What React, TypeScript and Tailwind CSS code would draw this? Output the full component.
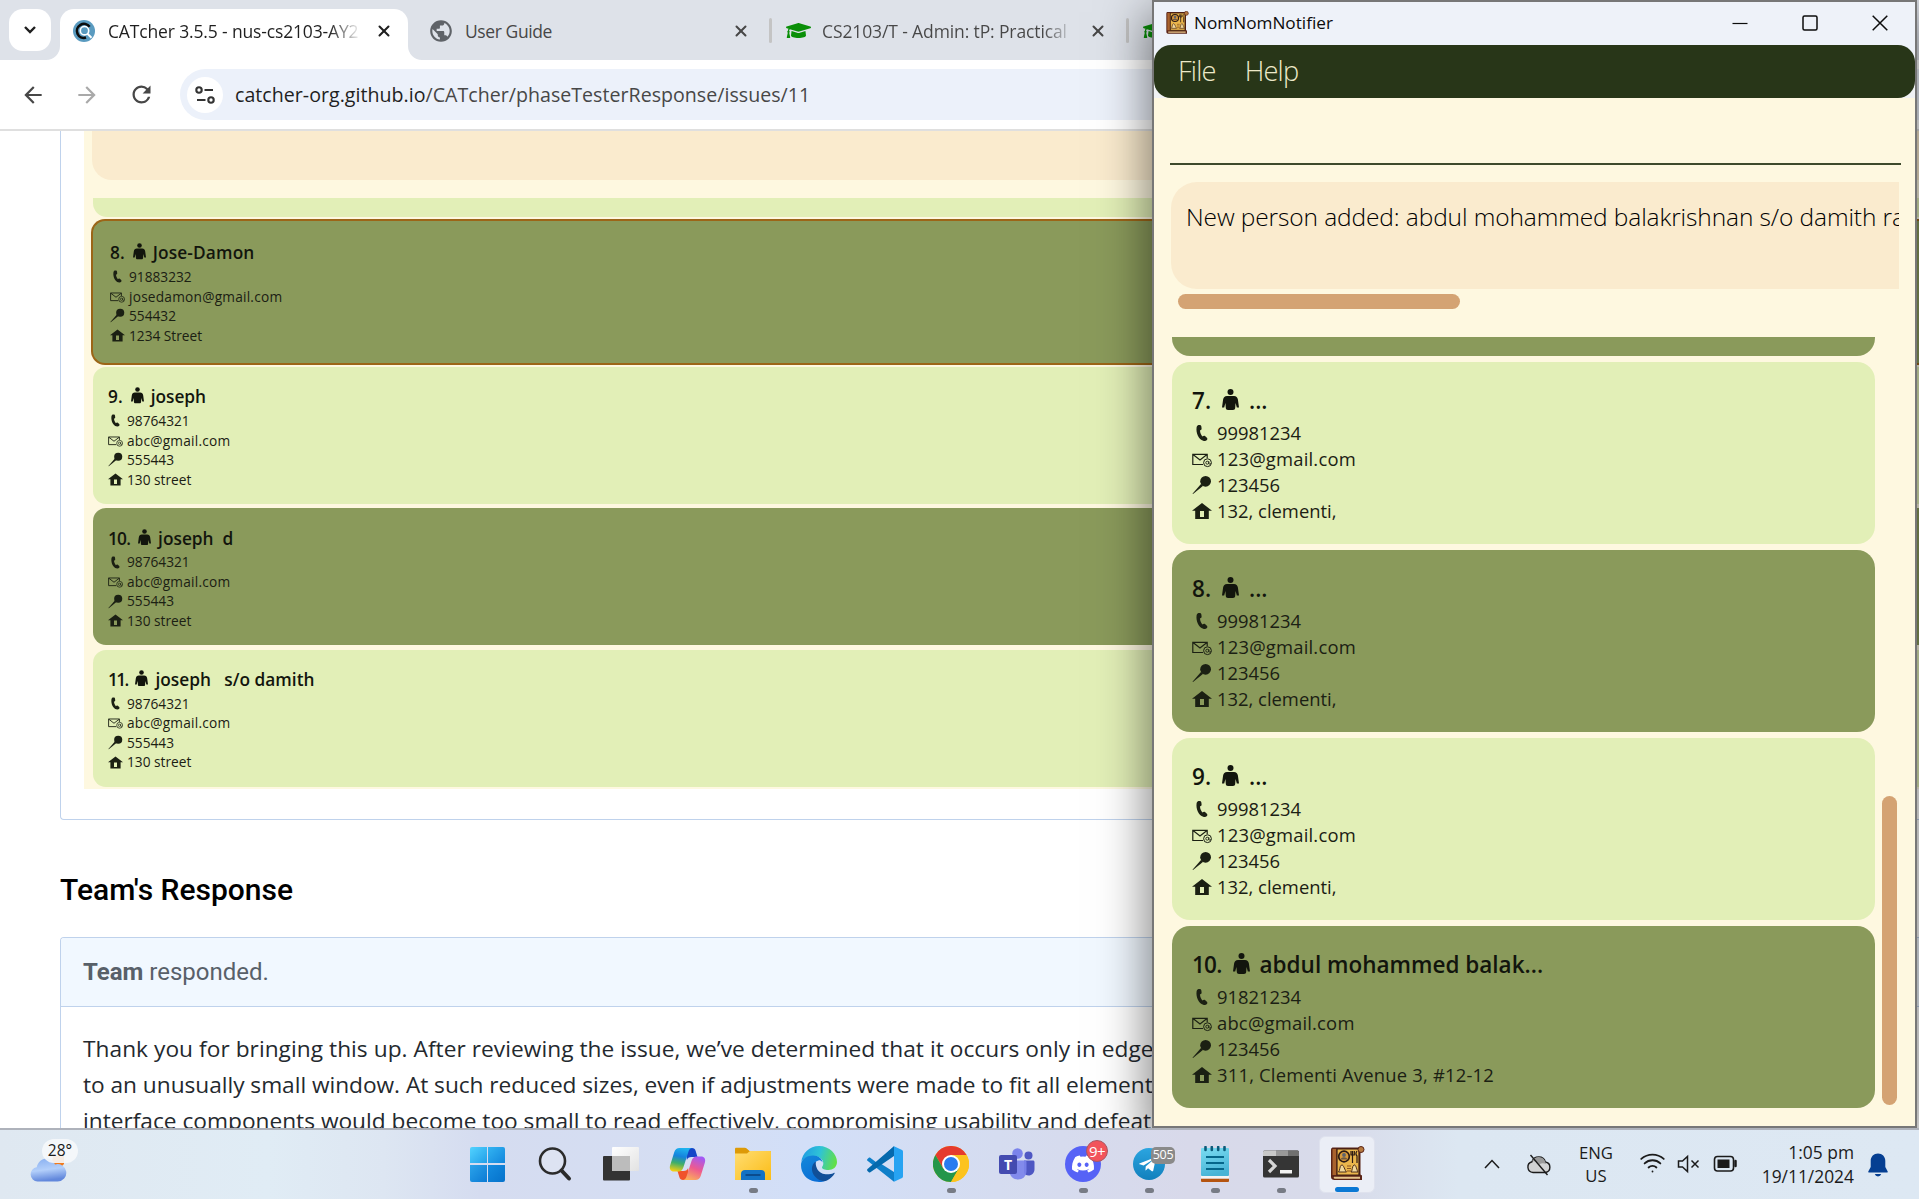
import type { ReactNode } from "react";
import { Wifi, X } from "lucide-react";
import { FaDiscord, FaGraduationCap, FaTelegramPlane } from "react-icons/fa";
import { MdArrowBack, MdArrowForward, MdPublic, MdRefresh } from "react-icons/md";

type Person = { id: number; name: string; phone: string; email: string; code: string; address: string };

const leftPeople: Person[] = [
  { id: 8, name: "Jose-Damon", phone: "91883232", email: "josedamon@gmail.com", code: "554432", address: "1234 Street" },
  { id: 9, name: "joseph", phone: "98764321", email: "abc@gmail.com", code: "555443", address: "130 street" },
  { id: 10, name: "joseph  d", phone: "98764321", email: "abc@gmail.com", code: "555443", address: "130 street" },
  { id: 11, name: "joseph   s/o damith", phone: "98764321", email: "abc@gmail.com", code: "555443", address: "130 street" },
];

const rightPeople: Person[] = [
  { id: 7, name: "...", phone: "99981234", email: "123@gmail.com", code: "123456", address: "132, clementi," },
  { id: 8, name: "...", phone: "99981234", email: "123@gmail.com", code: "123456", address: "132, clementi," },
  { id: 9, name: "...", phone: "99981234", email: "123@gmail.com", code: "123456", address: "132, clementi," },
  { id: 10, name: "abdul mohammed balak...", phone: "91821234", email: "abc@gmail.com", code: "123456", address: "311, Clementi Avenue 3, #12-12" },
];

/* Tightens the numerals of two-digit list indices. */
function indexTracking(id: number) {
  if (id === 11) return "tracking-[-1.7px]";
  if (id === 10) return "tracking-[-0.8px]";
  return "";
}

/* ---------- contact glyphs ---------- */

function PersonIcon({ className }: { className: string }) {
  return (
    <svg viewBox="0 0 17 21" className={className} fill="currentColor">
      <circle cx="8.500" cy="3" r="3" />
      <path d="M5 7h7c2.300 0 3.400 1.200 3.900 3.600L17 18.600h-2.200L13.600 14l-.4 5c-.1 1.300-.8 2-2.200 2H6c-1.400 0-2.100-.7-2.200-2l-.4-5-1.200 4.600H0l1.100-8C1.600 8.200 2.700 7 5 7z" />
    </svg>
  );
}

function PhoneIcon() {
  return (
    <svg viewBox="0 0 20 20" className="size-full" fill="currentColor">
      <path d="M4.600 4.200C4.900 2.600 6 2 7.400 2c1.300 0 1.900.6 2 1.800l.2 1.700c.1 1-.5 1.500-1.600 1.900.1 2.400 1 4.500 2.500 6.100.9-.8 1.700-1 2.500-.4l1.600 1.300c.9.8 1 1.700.3 2.600-.8 1-2.100 1.300-3.700.8C6.800 16.400 3.700 10.200 4.600 4.200z" />
    </svg>
  );
}

function MailIcon() {
  return (
    <svg viewBox="0 0 20 20" className="size-full" fill="none" stroke="currentColor" strokeWidth="1.200">
      <path d="M11 15.500H.8V5.300h14.400v4M1 5.600l7 5.400 7-5.400" />
      <circle cx="15.500" cy="13.700" r="3.900" strokeWidth="1" />
      <circle cx="15.300" cy="13.700" r="1.500" strokeWidth=".9" />
      <path d="M16.800 12.300v2c0 1.200 1.800 1 2.200 0" strokeWidth=".9" />
    </svg>
  );
}

function PinIcon() {
  return (
    <svg viewBox="0 0 20 20" className="size-full" fill="currentColor">
      <circle cx="13.600" cy="6.300" r="5.400" />
      <path d="M.5 18.700 9.200 8.800l2 2L1 19z" />
    </svg>
  );
}

function HomeIcon() {
  return (
    <svg viewBox="0 0 20 20" className="size-full" fill="currentColor" fillRule="evenodd">
      <path d="M10 2 20 9.700h-3.200V18H3.200V9.700H0zM8 10v6h4v-6z" />
    </svg>
  );
}

/* ---------- contact cards ---------- */

function SmallRow({ icon, text, wide }: { icon: ReactNode; text: string; wide?: boolean }) {
  return (
    <div className="flex h-[19.6px] items-center gap-[4px]">
      <span className="size-[15px] shrink-0">{icon}</span>
      <span className={"text-[13.7px] leading-none " + (wide ? "tracking-[0.22px]" : "")}>{text}</span>
    </div>
  );
}

function SmallCard({ p, tone, selected }: { p: Person; tone: string; selected?: boolean }) {
  return (
    <div
      className={
        (selected
          ? "-ml-[2px] h-[146px] rounded-l-[14px] border-2 border-r-0 border-[#9c6517] pt-[20px] pl-[17px] "
          : "h-[137px] rounded-l-[13px] pt-[18px] pl-[15px] ") + tone
      }
    >
      <div className="flex h-[24px] items-center text-[17.3px] font-semibold text-[#12150d]">
        <span className={"mr-[8px] leading-none " + indexTracking(p.id)}>{p.id}.</span>
        <PersonIcon className="mb-[3px] h-[16.5px] w-[13px]" />
        <span className={"ml-[7px] leading-none whitespace-pre " + (selected ? "tracking-[0.15px]" : "")}>{p.name}</span>
      </div>
      <div className="mt-[2px] text-[#1b2013]">
        <SmallRow icon={<PhoneIcon />} text={p.phone} />
        <SmallRow icon={<MailIcon />} text={p.email} wide />
        <SmallRow icon={<PinIcon />} text={p.code} />
        <SmallRow icon={<HomeIcon />} text={p.address} />
      </div>
    </div>
  );
}

function BigRow({ icon, text, wide }: { icon: ReactNode; text: string; wide?: boolean }) {
  return (
    <div className="flex h-[26.1px] items-center gap-[5px]">
      <span className="size-[20px] shrink-0">{icon}</span>
      <span className={"text-[18.4px] leading-none " + (wide ? "tracking-[0.2px]" : "")}>{text}</span>
    </div>
  );
}

function BigCard({ p, tone }: { p: Person; tone: string }) {
  return (
    <div className={"h-[182px] shrink-0 rounded-[18px] pt-[24px] pl-[20px] " + tone}>
      <div className="flex h-[30px] items-center text-[22.5px] font-semibold text-[#12150d]">
        <span className={"mr-[11px] leading-none " + indexTracking(p.id)}>{p.id}.</span>
        <PersonIcon className="mb-[4px] h-[21px] w-[17px]" />
        <span className="ml-[10px] leading-none">{p.name}</span>
      </div>
      <div className="mt-[4px] text-[#1b2013]">
        <BigRow icon={<PhoneIcon />} text={p.phone} />
        <BigRow icon={<MailIcon />} text={p.email} wide />
        <BigRow icon={<PinIcon />} text={p.code} />
        <BigRow icon={<HomeIcon />} text={p.address} wide={p.id === 10} />
      </div>
    </div>
  );
}

/* ---------- browser ---------- */

function CatcherLogo() {
  return (
    <svg viewBox="0 0 22 22" className="size-[22px] shrink-0">
      <circle cx="11" cy="11" r="11" fill="#5a9bc0" />
      <path d="M16.600 6.800A7 7 0 1 0 13 17.600" fill="none" stroke="#0c0c0c" strokeWidth="2.600" />
      <circle cx="11.500" cy="10.700" r="4.200" fill="#5a9bc0" stroke="#fff" strokeWidth="1.600" />
      <path d="m14.500 13.800 4 4" stroke="#fff" strokeWidth="2" />
    </svg>
  );
}

function Close({ className }: { className: string }) {
  return <X strokeWidth={2.7} className={"size-[18px] shrink-0 " + className} />;
}

function TabStrip() {
  return (
    <div className="flex h-[60px] items-start bg-[#dee2e9] pl-[9px]">
      <div className="mt-[9px] flex h-[42px] w-[42px] items-center justify-center rounded-[14px] bg-white">
        <svg viewBox="0 0 12 8" className="h-[8px] w-[12px]" fill="none" stroke="#1f1f1f" strokeWidth="2.400">
          <path d="m1 1 5 5 5-5" />
        </svg>
      </div>
      <div className="relative mt-[9px] ml-[9px] flex h-[51px] w-[348px] rounded-t-[14px] bg-white pl-[13px]">
        <svg viewBox="0 0 14 14" className="absolute bottom-0 -left-[14px] size-[14px]" fill="#fff">
          <path d="M14 0v14H0A14 14 0 0 0 14 0z" />
        </svg>
        <svg viewBox="0 0 14 14" className="absolute -right-[14px] bottom-0 size-[14px]" fill="#fff">
          <path d="M0 0v14h14A14 14 0 0 1 0 0z" />
        </svg>
        <div className="flex h-[43px] items-center">
          <CatcherLogo />
          <span className="ml-[13px] w-[251px] overflow-hidden bg-[linear-gradient(90deg,#1f1f1f_88%,#1f1f1f11)] bg-clip-text text-[17.5px] leading-[26px] tracking-[-0.15px] whitespace-nowrap text-transparent">
            CATcher 3.5.5 - nus-cs2103-AY2
          </span>
          <Close className="ml-[16px] text-[#1f1f1f]" />
        </div>
      </div>
      <div className="mt-[9px] flex h-[43px] items-center pl-[20px] text-[#474747]">
        <MdPublic className="size-[26px] text-[#5f6368]" />
        <span className="ml-[11px] w-[259px] text-[17.5px] leading-[26px] tracking-[-0.4px]">User Guide</span>
        <Close className="ml-[8px]" />
        <span className="ml-[19px] h-[25px] w-[3px] rounded bg-[#c4c4c4]" />
        <FaGraduationCap className="ml-[14px] size-[25px] text-[#0a8f08]" />
        <span className="ml-[11px] w-[246px] overflow-hidden bg-[linear-gradient(90deg,#474747_90%,#47474733)] bg-clip-text text-[17.5px] leading-[26px] tracking-[-0.12px] whitespace-nowrap text-transparent">
          CS2103/T - Admin: tP: Practical
        </span>
        <Close className="ml-[21px]" />
        <span className="ml-[19px] h-[25px] w-[3px] rounded bg-[#c4c4c4]" />
        <FaGraduationCap className="ml-[14px] size-[25px] text-[#0a8f08]" />
      </div>
    </div>
  );
}

function Toolbar() {
  return (
    <div className="flex h-[71px] items-center border-b-2 border-[#dfdfdf] bg-white pl-[20px]">
      <MdArrowBack className="size-[26px] text-[#474747]" />
      <MdArrowForward className="ml-[28px] size-[26px] text-[#a9a9a9]" />
      <MdRefresh className="ml-[28px] size-[27px] text-[#474747]" />
      <div className="ml-[25px] flex h-[51px] flex-1 items-center rounded-l-full bg-[#ecf1fa] pl-[7px]">
        <div className="flex size-[36px] items-center justify-center rounded-full bg-white">
          <svg viewBox="0 0 20 18" className="h-[18px] w-[20px]" fill="none" stroke="#333" strokeWidth="2.100">
            <circle cx="4" cy="4" r="2.700" />
            <path d="M9.500 4H18M2 14h8.500" />
            <circle cx="16" cy="14" r="2.700" />
          </svg>
        </div>
        <span className="ml-[12px] text-[19.6px] leading-none tracking-[0.02px] text-[#474747]">
          <span className="text-[#1f1f1f]">catcher-org.github.io</span>/CATcher/phaseTesterResponse/issues/11
        </span>
      </div>
    </div>
  );
}

function IssueImage() {
  return (
    <div className="h-[658px] overflow-hidden bg-[#fef8e0] pl-[9px]">
      <div className="ml-[-1px] h-[49px] rounded-bl-[20px] bg-[#faebce]" />
      <div className="mt-[18px] h-[19px] rounded-bl-[14px] bg-[#e2efb7]" />
      <div className="mt-[2px] flex flex-col gap-[4.3px]">
        <div className="-mb-[2.3px]">
          <SmallCard p={leftPeople[0]} tone="bg-[#8a9a5b]" selected />
        </div>
        <SmallCard p={leftPeople[1]} tone="bg-[#e2efb7]" />
        <SmallCard p={leftPeople[2]} tone="bg-[#8a9a5b]" />
        <SmallCard p={leftPeople[3]} tone="bg-[#e2efb7]" />
      </div>
    </div>
  );
}

function Browser() {
  return (
    <div className="h-[1128px] overflow-hidden bg-white">
      <TabStrip />
      <Toolbar />
      <div className="ml-[60px]">
        <div className="h-[689px] rounded-bl-[4px] border-b border-l border-[#bfd2ec] pl-[23px]">
          <IssueImage />
        </div>
        <h2 className="mt-[50px] flex h-[38px] items-center font-['Roboto'] text-[30px] font-medium text-black">Team's Response</h2>
        <div className="mt-[29px] rounded-tl-[4px] border-t border-l border-[#bfd2ec]">
          <div className="flex h-[69px] items-center rounded-tl-[3px] border-b border-[#bfd2ec] bg-[#f1f8ff] pl-[22px] font-['Roboto'] text-[24px] text-[#586069]">
            <span>
              <b className="font-bold">Team</b> responded.
            </span>
          </div>
          <div className="pt-[24px] pl-[22px] text-[22.7px] leading-[36px] whitespace-nowrap text-[#24292e]">
            <p className="tracking-[0.045px]">Thank you for bringing this up. After reviewing the issue, we’ve determined that it occurs only in edge cases</p>
            <p className="tracking-[-0.03px]">to an unusually small window. At such reduced sizes, even if adjustments were made to fit all elements, the</p>
            <p>interface components would become too small to read effectively, compromising usability and defeating the</p>
          </div>
        </div>
      </div>
    </div>
  );
}

/* ---------- NomNomNotifier ---------- */

function BookIcon({ className }: { className: string }) {
  return (
    <svg viewBox="0 0 36 36" className={className}>
      <path d="M2 4c0-2 1-2.500 2.500-2.500H31.500v27l1.500 1v4.500H5.500C3.500 34 2 33 2 31z" fill="#5a2417" />
      <path d="M5 30.800h26v2H6c-1.500 0-1.500-1.500-1-2z" fill="#e6c58a" />
      <path d="M3.500 3h4v26h-4z" fill="#a9622c" />
      <path d="M8 3h22v26H8z" fill="#eab64c" stroke="#3a1d12" strokeWidth="1.200" />
      <circle cx="15" cy="10.500" r="5.300" fill="#d89a3a" stroke="#2c1a14" strokeWidth="1.700" />
      <circle cx="15" cy="9" r="1.900" fill="#5d6470" />
      <path d="M11.500 13.500c1-3 6-3 7 0" fill="#6c5a48" />
      <path d="M23.500 5v12M22 5v4h3.300V5M28 5c-1.500 2-1 4 0 5v7" fill="none" stroke="#2c1a14" strokeWidth="1.200" />
      <path d="M9.500 26c1.500-1 1-6 3-7s3.500 6 5 7zM22 26c1.500-1 1-6 3-7s3 6 4 7z" fill="#f0d79a" stroke="#3a1d12" strokeWidth=".9" />
      <path d="M18 20h4M18 22.500h4M18 25h4" stroke="#8a5523" strokeWidth="1" />
      <circle cx="32" cy="3.500" r="3" fill="#b5793f" stroke="#5a2417" strokeWidth="1" />
    </svg>
  );
}

function TitleBar() {
  return (
    <div className="flex h-[43px] items-center bg-[#eef2f9] pl-[11px] text-[#0c0c0c]">
      <BookIcon className="mb-[2px] size-[24px]" />
      <span className="mb-px ml-[5px] text-[17.2px] leading-none">NomNomNotifier</span>
      <div className="mb-[2px] ml-auto flex items-center gap-[54px] pr-[27px]">
        <svg viewBox="0 0 16 16" className="size-[16px]" stroke="currentColor" strokeWidth="1.200">
          <path d="M.5 8.500h15" />
        </svg>
        <svg viewBox="0 0 16 16" className="size-[16px]" fill="none" stroke="currentColor" strokeWidth="1.500">
          <rect x="1" y="1" width="14" height="14" rx="1.500" />
        </svg>
        <svg viewBox="0 0 16 16" className="size-[16px]" stroke="currentColor" strokeWidth="1.500">
          <path d="m.7.7 14.600 14.600M15.300.7.7 15.300" />
        </svg>
      </div>
    </div>
  );
}

function NomNomWindow() {
  return (
    <div className="absolute top-0 left-[1152px] flex h-[1128px] w-[765px] flex-col overflow-hidden border-2 border-[#777777] bg-[#fef8e0]">
      <TitleBar />
      <div className="h-[53px] shrink-0 bg-[linear-gradient(#eef2f9_50%,#f0f2f4_50%)]">
        <div className="flex h-full items-center gap-[29px] rounded-[17px] bg-[#283618] pb-[2px] pl-[24px] text-[27.2px] font-light text-[#ece9c9]">
          <span className="leading-none tracking-[-0.8px]">File</span>
          <span className="leading-none tracking-[-0.8px]">Help</span>
        </div>
      </div>
      <div className="mr-[14px] ml-[16px] h-[67px] shrink-0 border-b-2 border-[#3e4a2c]" />
      <div className="mt-[17px] ml-[17px] h-[107px] w-[728px] shrink-0 overflow-hidden rounded-l-[26px] bg-[#faebce] pt-[18px] pl-[15px]">
        <p className="text-[24.5px] leading-[34px] font-light tracking-[-0.11px] whitespace-nowrap text-black">
          New person added: abdul mohammed balakrishnan s/o damith ramesh
        </p>
      </div>
      <div className="mt-[5px] ml-[24px] h-[15px] w-[282px] shrink-0 rounded-full bg-[#d4a373]" />
      <div className="mt-[28px] flex min-h-0 flex-1 pl-[18px]">
        <div className="flex w-[703px] flex-col gap-[6px]">
          <div className="h-[19px] shrink-0 rounded-b-[18px] bg-[#8a9a5b]" />
          <BigCard p={rightPeople[0]} tone="bg-[#e2efb7]" />
          <BigCard p={rightPeople[1]} tone="bg-[#8a9a5b]" />
          <BigCard p={rightPeople[2]} tone="bg-[#e2efb7]" />
          <BigCard p={rightPeople[3]} tone="bg-[#8a9a5b]" />
        </div>
        <div className="mt-[459px] ml-[7px] h-[309px] w-[15px] rounded-full bg-[#d4a373]" />
      </div>
    </div>
  );
}

/* ---------- taskbar ---------- */

function WindowsLogo() {
  return (
    <div className="mr-[3px] grid size-[35px] grid-cols-2 gap-[1.5px] overflow-hidden rounded-[2px]">
      <span className="bg-linear-to-br from-[#52d3ff] to-[#1f9fe8]" />
      <span className="bg-linear-to-br from-[#33b4f2] to-[#1186dc]" />
      <span className="bg-linear-to-br from-[#2aa3ea] to-[#0a7ad4]" />
      <span className="bg-linear-to-br from-[#148ce0] to-[#0672cb]" />
    </div>
  );
}

function SearchIcon() {
  return (
    <svg viewBox="0 0 36 36" className="size-[36px]" fill="none" stroke="#2b2b2b">
      <circle cx="15.500" cy="15" r="12.500" strokeWidth="2.600" fill="#e6eaf4" fillOpacity=".5" />
      <path d="m24.500 24.500 7.500 8" strokeWidth="4" strokeLinecap="round" />
    </svg>
  );
}

function TaskViewIcon() {
  return (
    <svg viewBox="0 0 36 36" className="size-[36px]">
      <defs>
        <linearGradient id="tv" x1="0" y1="0" x2="1" y2="1">
          <stop offset="0" stopColor="#fff" />
          <stop offset="1" stopColor="#e2e2e2" />
        </linearGradient>
      </defs>
      <rect x="0" y="10" width="27" height="24.500" rx="1" fill="#333" />
      <rect x="9" y="1" width="27" height="24" rx="1" fill="url(#tv)" />
      <rect x="9" y="10" width="18" height="15" fill="#bcbcbc" />
    </svg>
  );
}

function CopilotIcon() {
  return (
    <svg viewBox="0 0 36 34" className="h-[34px] w-[37px]">
      <defs>
        <linearGradient id="cpA" x1="0.500" y1="0" x2="0.300" y2="1">
          <stop offset="0" stopColor="#1fb2ee" />
          <stop offset=".35" stopColor="#1583dd" />
          <stop offset=".65" stopColor="#3fae6a" />
          <stop offset="1" stopColor="#f4cf12" />
        </linearGradient>
        <linearGradient id="cpB" x1="0.700" y1="0" x2="0.300" y2="1">
          <stop offset="0" stopColor="#a259f5" />
          <stop offset=".5" stopColor="#ee5a8f" />
          <stop offset="1" stopColor="#fbb05a" />
        </linearGradient>
      </defs>
      <path d="M16 1h6.500c2 0 3 1 3.600 2.800L28 10h-6c-2.500 0-4 1-4.600 3z" fill="#1446c8" />
      <path d="M20 33h-6.500c-2 0-3-1-3.600-2.800L8 24h6c2.500 0 4-1 4.600-3z" fill="#f0532c" />
      <path d="M10 1h13c-2.200 0-3.300 1.500-4 3.500L14 20c-1 3-2.500 4.500-5 4.500H4.500C1 24.500-.4 21.800.6 18.500L4.800 5C5.700 2.200 7.400 1 10 1z" fill="url(#cpA)" />
      <path d="M26 33H13c2.200 0 3.300-1.500 4-3.500L22 14c1-3 2.500-4.500 5-4.500h4.500c3.500 0 4.900 2.700 3.900 6L31.200 29c-.9 2.800-2.600 4-5.200 4z" fill="url(#cpB)" />
    </svg>
  );
}

function FolderIcon() {
  return (
    <svg viewBox="0 0 36 34" className="h-[34px] w-[36px]">
      <defs>
        <linearGradient id="fd" x1="0" y1="0" x2="1" y2="1">
          <stop offset="0" stopColor="#ffdd72" />
          <stop offset="1" stopColor="#fbbc16" />
        </linearGradient>
      </defs>
      <path d="M0 2c0-.8.500-1.300 1.300-1.300h8.500c.8 0 1.300.2 1.900.8L14.500 4H35c.6 0 1 .4 1 1v6H0z" fill="#dd9a07" />
      <path d="M0 6.500h12L15 4h20c.6 0 1 .4 1 1v28H0z" fill="url(#fd)" />
      <path d="M6 33v-6c0-2.500 1.500-4 4-4h16c2.500 0 4 1.500 4 4v6z" fill="#1272c4" />
      <path d="M11 28h14" stroke="#0a3f7a" strokeWidth="1.400" strokeLinecap="round" />
    </svg>
  );
}

function EdgeIcon() {
  return (
    <svg viewBox="0 0 36 36" className="size-[36px]">
      <defs>
        <linearGradient id="egA" x1="0" y1="0.300" x2="1" y2="0.500">
          <stop offset="0" stopColor="#1f9ce4" />
          <stop offset=".5" stopColor="#2fc3d6" />
          <stop offset="1" stopColor="#63e046" />
        </linearGradient>
        <linearGradient id="egB" x1="0" y1="0" x2="0.500" y2="1">
          <stop offset="0" stopColor="#1489da" />
          <stop offset="1" stopColor="#0b6fd6" />
        </linearGradient>
      </defs>
      <path d="M.3 16C1.200 7 8.500 0 18 0c10.500 0 18 8 18 16 0 5-4 8-8.600 8-4 0-6.400-1.400-6.400-2.600 0-.8 1.300-1.600 1.300-4 0-3.400-3.300-7.300-9.300-7.300C7 10.100 2 12.500.3 16z" fill="url(#egA)" />
      <path d="M.1 17.500C1 12.500 6 9.500 12 9.500c5.500 0 9.500 3.500 9.500 7-.8-1.800-2.600-2.300-4-2.100-3.500.6-5.200 4.300-4.200 9.200C14.500 29.500 19 34 24.500 34.700 22 36 18 36.200 14 35.600 5 34-.8 26.500.1 17.500z" fill="url(#egB)" />
      <path d="M15 15.500c-5.500 3-5 10.500-1 15 3.600 4.500 8.800 5.500 12 4 3.500-1.700 6-4.300 7.600-6.900.4-.7-.3-1-.9-.7-6.200 3-13.700 1.200-16.500-4-1.500-2.800-1.700-5.600-1.200-7.400z" fill="#114f98" />
    </svg>
  );
}

function VsCodeIcon() {
  return (
    <svg viewBox="0 0 36 36" className="size-[36px]">
      <path d="M27 .3 9.500 16.500 3.300 11.700c-.6-.4-1-.3-1.500 0L.5 13c-.6.600-.6 1.200 0 1.800L27 35.700V26L14 17.800 27 9z" fill="#0f7fc9" />
      <path d="M.5 23 27 .3V10L3.300 26.300c-.6.400-1 .3-1.500 0L.5 25c-.6-.6-.6-1.400 0-2z" fill="#0569ad" />
      <path d="M27 .3 34.500 3.700c.9.400 1.500 1 1.500 2v24.600c0 1-.6 1.600-1.500 2L27 35.700z" fill="#27a3f2" />
    </svg>
  );
}

function ChromeIcon() {
  return (
    <svg viewBox="0 0 36 36" className="size-[36px]">
      <circle cx="18" cy="18" r="18" fill="#fcc31e" />
      <path d="M18 9h15.600A18 18 0 0 0 2.400 9l7.800 13.500z" fill="#e53a2e" />
      <path d="M2.400 9A18 18 0 0 0 18 36l7.800-13.500L18 22l-7.800.5z" fill="#24964a" />
      <path d="M18 36a18 18 0 0 0 15.600-27H18l7.800 13.500z" fill="#fcc31e" />
      <circle cx="18" cy="18" r="9" fill="#fff" />
      <circle cx="18" cy="18" r="7" fill="#2a7bf0" />
    </svg>
  );
}

function TeamsIcon() {
  return (
    <div className="relative flex h-[36px] w-[36px] items-center">
      <svg viewBox="0 0 36 36" className="absolute inset-0 size-full">
        <circle cx="29.500" cy="9.500" r="4" fill="#4e57c3" />
        <path d="M25 14.500h9c.8 0 1.500.6 1.500 1.500v7c0 4-2.700 6.500-6 6.500-2 0-4.500-1-4.500-3z" fill="#4e57c3" />
        <circle cx="18.500" cy="7.500" r="5.300" fill="#7b83eb" />
        <path d="M10.500 14.500H26c.9 0 1.500.7 1.500 1.500v9c0 5-4 8.500-8.500 8.500s-8.500-3.500-8.500-8.500z" fill="#7b83eb" opacity=".92" />
      </svg>
      <span className="relative flex h-[19px] w-[18px] items-center justify-center rounded-[2px] bg-[#444bb0] text-[14px] font-bold text-white">T</span>
    </div>
  );
}

function DiscordIcon() {
  return (
    <div className="relative flex size-[36px] items-center justify-center rounded-full bg-[#5662f6]">
      <FaDiscord className="size-[24px] text-white" />
      <span className="absolute -top-[6px] left-[21px] flex size-[22px] items-center justify-center rounded-full border border-[#a85862] bg-[#f2545b] text-[15px] leading-none tracking-[-0.5px] text-white">9+</span>
    </div>
  );
}

function TelegramIcon() {
  return (
    <div className="relative flex size-[32px] items-center justify-center rounded-full bg-linear-to-b from-[#2ba5e0] to-[#1180bd]">
      <FaTelegramPlane className="mr-[3px] size-[19px] text-white" />
      <span className="absolute -top-[1px] left-[18px] flex h-[17px] w-[24px] items-center justify-center rounded-[5px] bg-[#8a8a8a] text-[12.5px] leading-none tracking-[-0.3px] text-white">505</span>
    </div>
  );
}

function NotepadIcon() {
  return (
    <svg viewBox="0 0 28 36" className="h-[36px] w-[28px]">
      <defs>
        <linearGradient id="np" x1="0" y1="0" x2="0.300" y2="1">
          <stop offset="0" stopColor="#7adcf2" />
          <stop offset="1" stopColor="#48b4d6" />
        </linearGradient>
      </defs>
      <path d="M0 32.500h28V35a1 1 0 0 1-1 1H1a1 1 0 0 1-1-1z" fill="#b55410" />
      <path d="M0 29h28v3.500H0z" fill="#f4f4f4" />
      <rect y="2" width="28" height="28" rx="1" fill="url(#np)" />
      <path d="M5 11h18M5 17h18M5 23h18" stroke="#05668a" strokeWidth="1.900" />
      <path d="M4.500 1v3M10.800 1v3M17.200 1v3M23.500 1v3" stroke="#0b5b7a" strokeWidth="2.600" strokeLinecap="round" />
    </svg>
  );
}

function TerminalIcon() {
  return (
    <svg viewBox="0 0 36 28" className="h-[28px] w-[36px]">
      <rect y=".5" width="36" height="27" rx="1.500" fill="#353535" />
      <path d="M0 6V2A1.500 1.500 0 0 1 1.500.5H13V6z" fill="#c8c8c8" />
      <path d="M13 .5h12V6H13z" fill="#999" />
      <path d="M25 .5h9.500A1.500 1.500 0 0 1 36 2v4H25z" fill="#707070" />
      <path d="m6 10 6 6-6 6" fill="none" stroke="#d6d6d6" strokeWidth="3.200" />
      <rect x="17" y="20" width="12" height="3.500" fill="#f2f2f2" />
    </svg>
  );
}

function Slot({ children, running }: { children: ReactNode; running?: boolean }) {
  return (
    <div className="relative flex w-[66px] items-center justify-center">
      {children}
      {running && <span className="absolute bottom-[5px] h-[5px] w-[9px] rounded-full bg-[#777b85]" />}
    </div>
  );
}

function WeatherIcon() {
  return (
    <svg viewBox="0 0 38 38" className="size-[38px]">
      <defs>
        <linearGradient id="wc" x1="0" y1="0" x2="0.200" y2="1">
          <stop offset="0" stopColor="#86aef0" />
          <stop offset=".55" stopColor="#b3cffa" />
          <stop offset="1" stopColor="#6288dc" />
        </linearGradient>
      </defs>
      <path d="M24 10h11v8l-5 5h-8z" fill="#f07a1c" />
      <path d="M8.500 35.500a7.200 7.200 0 0 1-.8-14.300C9 16 12.500 12.500 17.500 12.500c4 0 7 2.500 8.500 6a8.700 8.700 0 1 1 2.500 17z" fill="url(#wc)" />
    </svg>
  );
}

function Tray() {
  return (
    <div className="flex items-center text-[#1b1b1b]">
      <svg viewBox="0 0 16 10" className="mb-[2px] h-[10px] w-[16px]" fill="none" stroke="currentColor" strokeWidth="1.500">
        <path d="m1 9 7-7.500L15 9" />
      </svg>
      <svg viewBox="0 0 26 22" className="ml-[26px] h-[22px] w-[26px]" fill="#d2d3d4" stroke="currentColor" strokeWidth="1.400">
        <path d="M7 18.500a5.500 5.500 0 0 1-1-10.800C7 4.500 9.700 3 12.800 3c3.500 0 5.800 2.200 6.500 5a5.300 5.300 0 0 1 0 10.500z" />
        <path d="M6 7.500c3.500-1 6 .5 7.500 2.800 2-1.500 4.500-1.500 6.500 0l-.7-2.300C18.600 5.200 16.300 3 12.800 3 9.700 3 7 4.500 6 7.500z" fill="#9a9a9a" stroke="none" />
        <path d="m4.500 1 17 20" />
      </svg>
      <div className="mb-px ml-[25px] flex w-[38px] flex-col text-center text-[16.7px] leading-[23px]">
        <span>ENG</span>
        <span>US</span>
      </div>
      <Wifi className="mb-[4px] ml-[24px] size-[27px]" strokeWidth={1.6} />
      <svg viewBox="0 0 24 20" className="mb-[2px] ml-[11px] h-[20px] w-[24px]" fill="none" stroke="currentColor" strokeWidth="1.500">
        <path d="M1.500 7v6h4l5 4.500v-15L5.500 7zM14.500 6.500l7 7M21.500 6.500l-7 7" />
      </svg>
      <svg viewBox="0 0 26 18" className="mb-[2px] ml-[12px] h-[18px] w-[26px]" fill="none" stroke="currentColor" strokeWidth="1.600">
        <rect x="1.500" y="1.500" width="19" height="14.500" rx="3" />
        <rect x="4.500" y="4.500" width="12" height="8.500" fill="currentColor" stroke="none" />
        <path d="M22.500 6v5" strokeWidth="2.500" strokeLinecap="round" />
      </svg>
      <div className="mb-[2px] ml-[19px] flex w-[96px] flex-col text-right text-[17.4px] leading-[24px]">
        <span>1:05 pm</span>
        <span>19/11/2024</span>
      </div>
      <svg viewBox="0 0 20 24" className="mr-[31px] ml-[14px] h-[24px] w-[20px]" fill="#053f92">
        <path d="M10 .5c4.200 0 7.300 3.100 7.300 7.300V14l2.300 4.200c.4.800 0 1.300-.8 1.300H1.200c-.8 0-1.200-.5-.8-1.300L2.700 14V7.800C2.700 3.600 5.800.5 10 .5zM6.800 21h6.400a3.300 3.300 0 0 1-6.400 0z" />
      </svg>
    </div>
  );
}

function Taskbar() {
  return (
    <div className="relative flex h-[71px] border-t-2 border-[#aeb2bb] bg-[linear-gradient(90deg,#dfe8f1_0%,#e0ecf5_14%,#dde6f2_20%,#d5dcf0_25%,#d5def3_36%,#d2dff8_42%,#d5dcf0_52%,#d8d9ea_62%,#d8dbea_70%,#dce7f2_76%,#dde8f3_100%)]">
      <div className="flex w-[456px] items-start pl-[29px]">
        <div className="relative mt-[16px]">
          <WeatherIcon />
          <span className="absolute -top-[7px] left-[13px] flex h-[24px] w-[36px] items-center justify-center rounded-full bg-[#f6f8fb]/90 text-[15.5px] text-[#1b1b1b]">28°</span>
        </div>
      </div>
      <div className="flex pb-px">
        <Slot><WindowsLogo /></Slot>
        <Slot><SearchIcon /></Slot>
        <Slot><TaskViewIcon /></Slot>
        <Slot><CopilotIcon /></Slot>
        <Slot running><FolderIcon /></Slot>
        <Slot><EdgeIcon /></Slot>
        <Slot><VsCodeIcon /></Slot>
        <Slot running><ChromeIcon /></Slot>
        <Slot><TeamsIcon /></Slot>
        <Slot running><DiscordIcon /></Slot>
        <Slot running><TelegramIcon /></Slot>
        <Slot running><NotepadIcon /></Slot>
        <Slot running><TerminalIcon /></Slot>
        <div className="relative ml-[5px] flex h-[57px] w-[56px] items-center justify-center self-center rounded-[6px] border border-[#dfe2ee] bg-[#ebeef6]">
          <BookIcon className="size-[36px]" />
          <span className="absolute bottom-0 h-[5px] w-[24px] rounded-full bg-[#0a78d4]" />
        </div>
      </div>
      <div className="ml-auto flex">
        <Tray />
      </div>
    </div>
  );
}

export default function App() {
  return (
    <div className="relative h-[1199px] w-[1919px] overflow-hidden bg-[#dde2ea] font-['Open_Sans','Noto_Sans',sans-serif]">
      <Browser />
      <div className="absolute top-0 left-[1152px] h-[1128px] w-[765px] shadow-[0_16px_46px_4px_rgba(0,0,0,0.5)]" />
      <NomNomWindow />
      <Taskbar />
    </div>
  );
}
